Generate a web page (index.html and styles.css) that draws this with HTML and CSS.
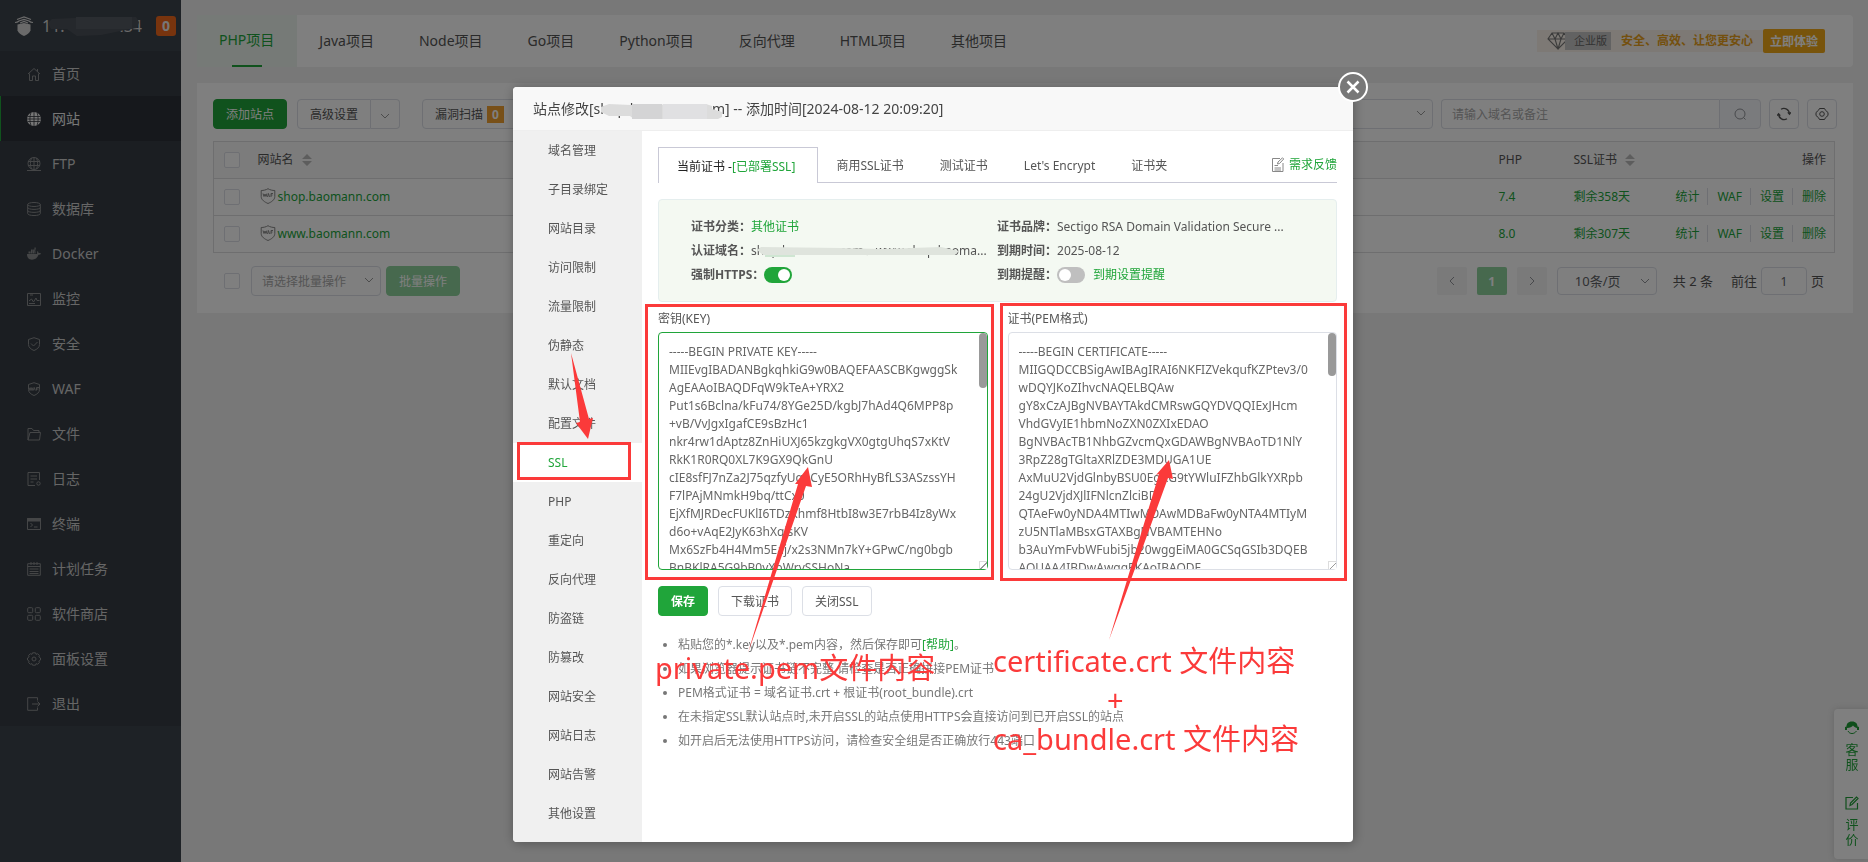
FILE: index.html
```html
<!DOCTYPE html>
<html lang="zh-CN">
<head>
<meta charset="utf-8">
<title>网站管理</title>
<link rel="stylesheet" href="styles.css">
</head>
<body>
<div class="app">
  <aside class="sidebar">
    <div class="brand">
      <svg class="brand-logo" viewBox="0 0 20 20" width="20" height="20"><path d="M3.500 8.500L10 7l6.500 1.500v6C15.500 17 13 19 10 20c-3-1-5.500-3-6.500-5.500z" fill="#d5d5d5"/><path d="M1 6.500c2 0 3-.5 4-1.500L10 3.500 15 5c1 1 2 1.500 4 1.500M3 3.500L10 1l7 2.500M6 7l4-1.500L14 7" fill="none" stroke="#d5d5d5" stroke-width="1.200"/></svg>
      <span class="brand-ip"><span>1</span><span>1.</span><span>.34</span><svg class="smear" viewBox="0 0 92 22" width="92" height="22"><path d="M0 7l4-4 24-1 60-1 3 5-2 6-12 2-24 5-24 1-10-7H3z" fill="#4b5159"/><path d="M28 1h56v12H28z" fill="#555b62"/></svg></span>
      <span class="brand-badge">0</span>
    </div>
    <nav class="menu">
      <a href="#"><svg viewBox="0 0 14 14"><path d="M1 7l6-5.500L13 7M2.500 6.500v7H5.500V9h3v4.500h3v-7M10.500 2v2.500"/></svg>首页</a>
      <a href="#" class="active"><svg viewBox="0 0 14 14"><circle cx="7" cy="7" r="7" fill="#eee" stroke="none"/><path d="M.5 4.500h13M.5 9.500h13M7 0v14M0 7h14M4 .5c-1.500 4-1.500 9 0 13M10 .5c1.500 4 1.500 9 0 13" stroke="#2d3138" stroke-width=".8"/></svg>网站</a>
      <a href="#"><svg viewBox="0 0 14 14"><circle cx="7" cy="6.500" r="6"/><path d="M1 4.500h12M1 8.500h12M7 .5v12M4.500 1c-1.500 3.500-1.500 7.500 0 11M9.500 1c1.500 3.500 1.500 7.500 0 11M0 13.500h14"/></svg>FTP</a>
      <a href="#"><svg viewBox="0 0 14 14"><ellipse cx="7" cy="2.500" rx="6.300" ry="2"/><path d="M.7 2.500v9c0 2.700 12.600 2.700 12.600 0v-9M.7 5.500c0 2.500 12.600 2.500 12.600 0M.7 8.500c0 2.500 12.600 2.500 12.600 0"/></svg>数据库</a>
      <a href="#"><svg viewBox="0 0 14 14"><path d="M0 7h10c.3-1-.2-2 .5-3 .8.7 1 1.300 1 2 1 0 2 0 2.500.4-.5 1-1.500 1.400-2.500 1.400C10.500 11 8 12.700 5 12.700 2 12.700 0 11 0 7z" fill="#8a8c8e" stroke="none"/><path d="M1.500 5.500h7M4 3.500h4.500M7.500 1.500h1.200" stroke-width="1.800" stroke-dasharray="1.700 .4"/></svg>Docker</a>
      <a href="#"><svg viewBox="0 0 14 14"><path d="M.5 1.500h13v12H.5zM2 9l2.500-2 2 3L9 6l1 2.500h2.500M3 3h3M2 11.500h6"/></svg>监控</a>
      <a href="#"><svg viewBox="0 0 14 14"><path d="M7 .7l5.500 1.800v5c0 3-2.500 4.800-5.500 6-3-1.200-5.500-3-5.500-6v-5zM4 6.500L6.500 9l4-4"/></svg>安全</a>
      <a href="#"><svg viewBox="0 0 14 14"><path d="M7 .7l5.500 1.800v5c0 3-2.500 4.800-5.500 6-3-1.200-5.500-3-5.500-6v-5z"/><path d="M2 5.500l1 3 1-3 1 3L6 5.500M6.300 8.500l1-3 1 3M9.500 8.500v-3h2.500M9.500 7h2"/></svg>WAF</a>
      <a href="#"><svg viewBox="0 0 14 14"><path d="M1 13V1.500h4L6.500 3.500H12v2M1 13l2-7.500h10.500L12.500 13z"/></svg>文件</a>
      <a href="#"><svg viewBox="0 0 14 14"><path d="M8 13.500H1V.5h11.500V8M3.500 4h6.500M3.500 7h6.500M3.500 10h3"/><circle cx="11.500" cy="11.500" r="1.700"/></svg>日志</a>
      <a href="#"><svg viewBox="0 0 14 14"><path d="M.5 1.500h13v11H.5zM3.500 6l2 2-2 2M7 10h3.500"/><path d="M.5 1.500h13v2.500H.5z" fill="#8a8c8e"/></svg>终端</a>
      <a href="#"><svg viewBox="0 0 14 14"><path d="M.7 1.700h12.600v11.600H.7zM.7 4.500h12.600M4 0v3M7 0v3M10 0v3M2.500 7h9M2.500 9.500h9M2.500 11.500h9" /></svg>计划任务</a>
      <a href="#"><svg viewBox="0 0 14 14"><rect x=".7" y=".7" width="5" height="5" rx="1"/><rect x="8.300" y=".7" width="5" height="5" rx="1"/><rect x=".7" y="8.300" width="5" height="5" rx="1"/><rect x="8.300" y="8.300" width="5" height="5" rx="1"/></svg>软件商店</a>
      <a href="#"><svg viewBox="0 0 14 14"><path d="M5.500 .8h3l.5 1.500 1.700-.5 1.700 1.600-.5 1.600.6.500 1 .5v2l-1 .5-.6.500.5 1.600-1.700 1.600L9 11.700l-.5 1.500h-3L5 11.700l-1.700.5-1.700-1.600.5-1.600-.6-.5-1-.5V6l1-.5.6-.5-.5-1.600 1.700-1.600L5 2.300z"/><circle cx="7" cy="7" r="2"/></svg>面板设置</a>
      <a href="#"><svg viewBox="0 0 14 14"><path d="M10.500 3.500V.7H.7v12.600h9.800v-2.800M5 7h8M10.500 4.500L13 7l-2.500 2.500"/></svg>退出</a>
    </nav>
  </aside>

  <main class="main">
    <header class="topnav">
      <nav class="project-tabs">
        <a href="#" class="active">PHP项目</a><a href="#">Java项目</a><a href="#">Node项目</a><a href="#">Go项目</a><a href="#">Python项目</a><a href="#">反向代理</a><a href="#">HTML项目</a><a href="#">其他项目</a>
      </nav>
      <div class="promo">
        <svg class="diamond" viewBox="0 0 22 18" width="22" height="18"><path d="M5 1h12l4 6-10 10L1 7zM1 7h20M8 7l3 10 3-10M5 1l3 6 3-6 3 6 3-6" fill="none" stroke="#777" stroke-width="1.100"/></svg>
        <span class="edition">企业版</span>
        <strong>安全、高效、让您更安心</strong>
        <button type="button">立即体验</button>
      </div>
    </header>

    <section class="panel">
      <div class="toolbar">
        <button type="button" class="btn primary">添加站点</button>
        <div class="split"><button type="button" class="btn">高级设置</button><button type="button" class="btn arrow" aria-label="更多"><svg class="chev" viewBox="0 0 10 6"><path d="M1 1l4 4 4-4"/></svg></button></div>
        <button type="button" class="btn scan">漏洞扫描<b>0</b></button>
        <span class="spacer"></span>
        <div class="picker category"><select aria-label="分类"><option>全部分类</option></select><svg class="chev" viewBox="0 0 10 6"><path d="M1 1l4 4 4-4"/></svg></div>
        <div class="search"><input type="text" aria-label="搜索" placeholder="请输入域名或备注"><button type="button" aria-label="搜索"><svg viewBox="0 0 14 14" width="14" height="14"><circle cx="7" cy="7" r="5"/><path d="M10.500 10.500L12.500 12.500"/></svg></button></div>
        <button type="button" class="btn square" aria-label="刷新"><svg viewBox="0 0 14 14" width="14" height="14"><path d="M4 2.300A5.500 5.500 0 0 1 12.400 7M10 11.700A5.500 5.500 0 0 1 1.600 7M10.800 5.300l1.700 2 1.400-2M.2 8.700l1.400-2 1.700 2" stroke-width="1.300"/></svg></button>
        <button type="button" class="btn square" aria-label="设置"><svg viewBox="0 0 14 14" width="14" height="14"><path d="M4.500 1.500h5l1 1.800 2.500 2.200v3l-2.500 2.200-1 1.800h-5l-1-1.800L1 8.500v-3l2.500-2.200z"/><circle cx="7" cy="7" r="2.300"/></svg></button>
      </div>

      <table class="sites">
        <colgroup><col class="c-check"><col><col class="c-php"><col class="c-ssl"><col class="c-ops"></colgroup>
        <thead><tr><th><input type="checkbox" aria-label="全选"></th><th>网站名<svg class="sort" viewBox="0 0 10 12"><path d="M5 0l5 5H0zM5 12l5-5H0z"/></svg></th><th>PHP</th><th>SSL证书<svg class="sort" viewBox="0 0 10 12"><path d="M5 0l5 5H0zM5 12l5-5H0z"/></svg></th><th class="right">操作</th></tr></thead>
        <tbody>
          <tr><td><input type="checkbox" aria-label="shop.baomann.com"></td><td><svg class="shield" viewBox="0 0 16 16"><path d="M8 .7C6 2 3.500 2.500 1.200 2.500v6c0 3.500 3.500 5.500 6.800 7 3.300-1.500 6.800-3.500 6.800-7v-6C12.500 2.500 10 2 8 .7z"/><path d="M3 5.500l1 3 1-2.500 1 2.500 1-3M7.500 9l1-3.500 1 3.500M11 9V5.500h2M11 7h1.500"/></svg><a href="#">shop.baomann.com</a></td><td><a href="#">7.4</a></td><td><a href="#">剩余358天</a></td><td class="ops"><a href="#">统计</a><a href="#">WAF</a><a href="#">设置</a><a href="#">删除</a></td></tr>
          <tr><td><input type="checkbox" aria-label="www.baomann.com"></td><td><svg class="shield" viewBox="0 0 16 16"><path d="M8 .7C6 2 3.500 2.500 1.200 2.500v6c0 3.500 3.500 5.500 6.800 7 3.300-1.500 6.800-3.500 6.800-7v-6C12.500 2.500 10 2 8 .7z"/><path d="M3 5.500l1 3 1-2.500 1 2.500 1-3M7.500 9l1-3.500 1 3.500M11 9V5.500h2M11 7h1.500"/></svg><a href="#">www.baomann.com</a></td><td><a href="#">8.0</a></td><td><a href="#">剩余307天</a></td><td class="ops"><a href="#">统计</a><a href="#">WAF</a><a href="#">设置</a><a href="#">删除</a></td></tr>
        </tbody>
      </table>

      <div class="footer">
        <input type="checkbox" aria-label="批量选择">
        <div class="picker batch"><select aria-label="批量操作"><option>请选择批量操作</option></select><svg class="chev" viewBox="0 0 10 6"><path d="M1 1l4 4 4-4"/></svg></div>
        <button type="button" class="btn primary faded">批量操作</button>
        <span class="spacer"></span>
        <div class="pager">
          <button type="button" aria-label="上一页"><svg viewBox="0 0 8 10" width="8" height="10"><path d="M6 1L2 5l4 4"/></svg></button>
          <button type="button" class="on">1</button>
          <button type="button" aria-label="下一页"><svg viewBox="0 0 8 10" width="8" height="10"><path d="M2 1l4 4-4 4"/></svg></button>
          <div class="picker size"><select aria-label="每页条数"><option>10条/页</option></select><svg class="chev" viewBox="0 0 10 6"><path d="M1 1l4 4 4-4"/></svg></div>
          <span class="total">共 2 条</span>
          <label class="jump">前往<input type="text" value="1">页</label>
        </div>
      </div>
    </section>
  </main>
</div>

<aside class="service">
  <a href="#"><svg viewBox="0 0 14 14" width="14" height="14"><path d="M7 .5C3 .5 1.500 3 1.500 5.500L0 6v3h2V7c3 0 5-1 6-2.500C9 6 11 7 12 7v2h2V6l-1.500-.5C12.500 3 11 .5 7 .5z" fill="#1f9d36"/><path d="M3 10c1 2 2.500 2.500 4 2.500s3-.5 4.500-2.500" fill="none" stroke="#1f9d36"/></svg><span>客服</span></a>
  <a href="#"><svg viewBox="0 0 14 14" width="14" height="14"><path d="M8 1.500H1v11.500h11.500V7M5 9.500l.5-2.500L11.500 1 13 2.500l-6 6z" fill="none" stroke="#1f9d36" stroke-width="1.200"/></svg><span>评价</span></a>
</aside>

<div class="overlay">
  <div class="dialog" role="dialog" aria-labelledby="dlg-title">
    <div class="dialog-head"><h1 id="dlg-title">站点修改[<span class="masked">shop.baomann.com<svg class="smear" viewBox="0 0 122 16" width="122" height="16"><path d="M0 4l8-3 22 1 75-1 6 2v3l10 3v5l-4 2H33l-4-3H8L0 9z" fill="#dcdcdc"/><path d="M62 1h44v15H62z" fill="#e0e0e2"/><path d="M31 1h30v15H31z" fill="#d4d4d5"/></svg></span>] -- 添加时间[2024-08-12 20:09:20]</h1></div>
    <button type="button" class="close" aria-label="关闭"><svg viewBox="0 0 30 30" width="30" height="30"><circle cx="15" cy="15" r="14" fill="#787878" stroke="#fff" stroke-width="2"/><path d="M9.500 9.500l11 11M20.500 9.500l-11 11" stroke="#fff" stroke-width="2.500"/></svg></button>
    <div class="dialog-body">
      <nav class="side">
        <a href="#">域名管理</a><a href="#">子目录绑定</a><a href="#">网站目录</a><a href="#">访问限制</a><a href="#">流量限制</a><a href="#">伪静态</a><a href="#">默认文档</a><a href="#">配置文件</a><a href="#" class="active">SSL</a><a href="#">PHP</a><a href="#">重定向</a><a href="#">反向代理</a><a href="#">防盗链</a><a href="#">防篡改</a><a href="#">网站安全</a><a href="#">网站日志</a><a href="#">网站告警</a><a href="#">其他设置</a>
      </nav>
      <div class="content">
        <div class="tabs">
          <button type="button" class="active">当前证书 -<span>[已部署SSL]</span></button><button type="button">商用SSL证书</button><button type="button">测试证书</button><button type="button">Let's Encrypt</button><button type="button">证书夹</button>
          <a href="#" class="feedback"><svg viewBox="0 0 14 16" width="14" height="16"><path d="M9 1.500H1.500v13H12V6M3.500 8.500H7M3.500 11h6.500M3.500 13h6.500M6.500 7l.5-2L11.500.8l1.200 1.200L8.500 6.500z" fill="none" stroke="#888"/></svg>需求反馈</a>
        </div>
        <div class="info">
          <div class="pair"><b>证书分类：</b><span class="green">其他证书</span></div>
          <div class="pair"><b>证书品牌：</b><span>Sectigo RSA Domain Validation Secure ...</span></div>
          <div class="pair"><b>认证域名：</b><span class="masked">shop.baomann.com、www.shop.baoma...<svg class="smear" viewBox="0 0 202 12" width="202" height="12"><path d="M0 5l4-3 80 1 40 1 30-1 30-1 18 4-4 4h-26l-50 0H6z" fill="#dfe4dd"/><path d="M8 10h30v2H8z" fill="#cfe6d2"/></svg></span></div>
          <div class="pair"><b>到期时间：</b><span>2025-08-12</span></div>
          <div class="pair"><b>强制HTTPS：</b><input type="checkbox" class="switch" aria-label="强制HTTPS" checked></div>
          <div class="pair"><b>到期提醒：</b><input type="checkbox" class="switch" aria-label="到期提醒"><a href="#" class="green">到期设置提醒</a></div>
        </div>
        <div class="pems">
          <div class="pem">
            <label for="key">密钥(KEY)</label>
            <div class="box"><textarea id="key" class="focused" spellcheck="false">-----BEGIN PRIVATE KEY-----
MIIEvgIBADANBgkqhkiG9w0BAQEFAASCBKgwggSk
AgEAAoIBAQDFqW9kTeA+YRX2
Put1s6Bclna/kFu74/8YGe25D/kgbJ7hAd4Q6MPP8p
+vB/VvJgxIgafCE9sBzHc1
nkr4rw1dAptz8ZnHiUXJ65kzgkgVX0gtgUhqS7xKtV
RkK1R0RQ0XL7K9GX9QkGnU
cIE8sfFJ7nZa2J75qzfyUqnCyE5ORhHyBfLS3ASzssYH
F7lPAjMNmkH9bq/ttCx0
EjXfMJRDecFUKlI6TDzKhmf8HtbI8w3E7rbB4Iz8yWx
d6o+vAqE2JyK63hXqjsKV
Mx6SzFb4H4Mm5Eaj/x2s3NMn7kY+GPwC/ng0bgb
BnBKlRA5G9bB0yXbWrySSHoNa</textarea><i class="thumb tall"></i><i class="grip"></i></div>
          </div>
          <div class="pem">
            <label for="crt">证书(PEM格式)</label>
            <div class="box"><textarea id="crt" spellcheck="false">-----BEGIN CERTIFICATE-----
MIIGQDCCBSigAwIBAgIRAI6NKFIZVekqufKZPtev3/0
wDQYJKoZIhvcNAQELBQAw
gY8xCzAJBgNVBAYTAkdCMRswGQYDVQQIExJHcm
VhdGVyIE1hbmNoZXN0ZXIxEDAO
BgNVBAcTB1NhbGZvcmQxGDAWBgNVBAoTD1NlY
3RpZ28gTGltaXRlZDE3MDUGA1UE
AxMuU2VjdGlnbyBSU0EgRG9tYWluIFZhbGlkYXRpb
24gU2VjdXJlIFNlcnZlciBD
QTAeFw0yNDA4MTIwMDAwMDBaFw0yNTA4MTIyM
zU5NTlaMBsxGTAXBgNVBAMTEHNo
b3AuYmFvbWFubi5jb20wggEiMA0GCSqGSIb3DQEB
AQUAA4IBDwAwggEKAoIBAQDF</textarea><i class="thumb"></i><i class="grip"></i></div>
          </div>
        </div>
        <div class="actions"><button type="button" class="btn primary strong">保存</button><button type="button" class="btn">下载证书</button><button type="button" class="btn">关闭SSL</button></div>
        <ul class="notes">
          <li>粘贴您的*.key以及*.pem内容，然后保存即可<a href="#" class="green">[帮助]</a>。</li>
          <li>如果浏览器提示证书链不完整,请检查是否正确拼接PEM证书</li>
          <li>PEM格式证书 = 域名证书.crt + 根证书(root_bundle).crt</li>
          <li>在未指定SSL默认站点时,未开启SSL的站点使用HTTPS会直接访问到已开启SSL的站点</li>
          <li>如开启后无法使用HTTPS访问，请检查安全组是否正确放行443端口</li>
        </ul>
      </div>
    </div>
    <div class="marks">
      <svg viewBox="0 0 840 755" width="840" height="755">
        <g fill="none" stroke="#fb3a3a" stroke-width="3"><path d="M133.500 218.500h346v273h-346zM488.500 217.500h344v275h-344zM5.500 356.500h111v35H5.500z"/></g>
        <g fill="#fb3a3a"><path d="M58 266l18 66 4-1-5 21-12-16 4-1zM235 566l50-169-3 0 13-17 4 20-6-1zM596 553l50-166-3 1 13-15 4 19-5-1z"/></g>
      </svg>
      <p class="m-key">private.pem文件内容</p>
      <p class="m-crt">certificate.crt 文件内容</p>
      <p class="m-plus">+</p>
      <p class="m-ca">ca_bundle.crt 文件内容</p>
    </div>
  </div>
</div>
</body>
</html>
```
FILE: styles.css
```css
* { box-sizing: border-box; }
body, button, input, select, textarea {
  font-family: "Noto Sans", "Noto Sans CJK SC", sans-serif;
  font-size: 12px;
}
body { margin: 0; background: #f0f0f0; color: #555; line-height: 18px; }
a { color: inherit; text-decoration: none; }
button { cursor: pointer; }
p, h1, ul { margin: 0; padding: 0; font-weight: normal; }
svg { flex: none; }

.app { display: flex; min-height: 100vh; }
.sidebar { width: 181px; flex: none; background: #3d444c; }
.brand { height: 51px; display: flex; align-items: center; padding: 0 5px 0 14px; color: #d5d5d5; font-size: 16px; }
.brand-ip { position: relative; margin-left: 8px; width: 100px; display: flex; }
.brand-ip span:nth-child(3) { margin-left: auto; }
.brand-ip .smear { left: 6px; top: -1px; }
.smear { position: absolute; }
.brand-badge { margin-left: auto; width: 20px; height: 20px; border-radius: 3px; background: #f0681c; color: #eee; font-weight: bold; font-size: 14px; line-height: 20px; text-align: center; }
.menu { background: #363d45; }
.menu a { display: flex; align-items: center; gap: 11px; height: 45px; padding-left: 27px; font-size: 14px; color: #ccc; }
.menu svg { width: 14px; height: 14px; fill: none; stroke: #8a8c8e; stroke-width: 1; }
.menu .active { background: #2d3138; padding-left: 26px; border-left: 1px solid #20a53a; color: #eee; }

.main { flex: 1; min-width: 0; padding: 15px 15px 16px 16px; }
.topnav { display: flex; justify-content: space-between; align-items: center; height: 52px; background: #fff; border-radius: 4px; padding-right: 28px; margin-bottom: 16px; }
.project-tabs { display: flex; height: 52px; }
.project-tabs a { padding: 0 23px 0 22px; line-height: 52px; font-size: 14px; color: #555; white-space: nowrap; }
.project-tabs .active { color: #20a53a; background: #ecf5ee; display: flex; flex-direction: column; align-items: center; line-height: 50px; }
.project-tabs .active::after { content: ""; width: 30px; height: 2px; background: #20a53a; }
.promo { display: flex; align-items: center; height: 22px; padding-left: 10px; background: #faf3ea; }
.edition { height: 18px; padding: 0 4px 0 9px; margin: 0 10px 0 -4px; background: #c4c4c4; color: #666; font-size: 11px; line-height: 18px; }
.promo strong { color: #e8a01c; margin-right: 10px; }
.promo button { height: 24px; padding: 0 7px; border: 0; border-radius: 2px; background: #f0a818; color: #fff; font-weight: bold; }

.panel { background: #fff; padding: 16px 16px 17px; }
.toolbar, .footer { display: flex; align-items: center; }
.spacer { flex: 1; }
.btn { height: 30px; padding: 0 12px; border: 1px solid #dcdfe6; border-radius: 4px; background: #fff; color: #555; white-space: nowrap; }
.btn.primary { background: #20a53a; border-color: #20a53a; color: #fff; }
.btn.strong { font-weight: bold; }
.split { display: flex; margin: 0 22px 0 10px; }
.split .btn:first-child { border-radius: 4px 0 0 4px; }
.split .arrow { border-radius: 0 4px 4px 0; border-left: 0; padding: 0 9px; }
.chev { width: 10px; height: 6px; fill: none; stroke: #999; }
.scan b { background: #f0a030; color: #fff; margin-left: 4px; padding: 0 5px; }
.picker { position: relative; }
.picker select { appearance: none; width: 100%; height: 30px; padding: 0 28px 0 10px; border: 1px solid #dcdfe6; border-radius: 4px; background: #fff; color: #aaa; }
.picker .chev { position: absolute; right: 7px; top: 11px; }
.category { width: 160px; }
.search { display: flex; margin: 0 8px; }
.search input { width: 278px; height: 30px; padding: 0 10px; border: 1px solid #dcdfe6; border-right: 0; border-radius: 4px 0 0 4px; }
.search input::placeholder { color: #aaa; }
.search button { width: 42px; height: 30px; border: 1px solid #dcdfe6; border-radius: 0 4px 4px 0; background: #f5f7fa; display: grid; place-items: center; }
.search svg, .square svg, .pager svg { fill: none; stroke: #909399; }
.square { width: 30px; padding: 0; display: grid; place-items: center; }
.square svg { stroke: #555; }
.square + .square { margin-left: 8px; }

.sites { width: calc(100% - 2px); table-layout: fixed; border-collapse: collapse; border: 1px solid #dcdddf; margin: 12px 0 13px; }
.c-check { width: 36px; } .c-php { width: 75px; } .c-ssl { width: 80px; } .c-ops { width: 189px; }
.sites th, .sites td { height: 37px; padding: 0 8px; font-weight: normal; text-align: left; border-bottom: 1px solid #dcdddf; white-space: nowrap; }
.sites th { background: #f8f8f8; }
.sites th:first-child, .sites td:first-child { padding: 0 0 0 10px; }
.sites .right, .sites .ops { text-align: right; }
.sites a { color: #20a53a; }
.ops a + a { margin-left: 8px; padding-left: 9px; border-left: 1px solid #dcdfe6; }
.sort { width: 10px; height: 12px; fill: #bbb; margin-left: 8px; vertical-align: -2px; }
.shield { width: 16px; height: 16px; margin: 0 2px; vertical-align: -3px; fill: none; stroke: #888; stroke-width: 1; }
input[type="checkbox"] { appearance: none; display: block; width: 16px; height: 16px; margin: 0; border: 1px solid #dcdfe6; border-radius: 2px; background: #fff; }
.footer { padding-left: 11px; height: 30px; }
.batch { width: 130px; margin: 0 5px 0 11px; }
.btn.faded { background: #8fd29d; border-color: #8fd29d; }
.pager { display: flex; align-items: center; padding-right: 13px; font-size: 13px; }
.pager button { width: 30px; height: 28px; margin-right: 10px; border: 0; border-radius: 2px; background: #f4f4f5; color: #fff; font-weight: bold; display: grid; place-items: center; }
.pager .on { background: #8fd29d; }
.size { width: 100px; margin-right: 16px; }
.size select { height: 28px; padding-left: 17px; color: #606266; font-size: 13px; }
.total { margin-right: 18px; }
.jump { display: flex; align-items: center; gap: 4px; }
.jump input { width: 46px; height: 28px; border: 1px solid #dcdfe6; border-radius: 4px; text-align: center; color: #606266; }

.service { position: fixed; right: 0; bottom: 3px; width: 34px; display: flex; flex-direction: column; gap: 24px; padding: 12px 2px 12px 4px; background: #fff; border-radius: 4px 0 0 4px; box-shadow: 0 0 6px #ccc; }
.service a { display: flex; flex-direction: column; align-items: center; gap: 7px; color: #20a53a; font-size: 13px; line-height: 15px; }
.service span { width: 13px; }

.overlay { position: fixed; inset: 0; display: flex; justify-content: center; align-items: flex-start; padding: 87px 2px 0 0; background: rgba(0, 0, 0, .5); }
.dialog { position: relative; width: 840px; background: #fff; border-radius: 4px; box-shadow: 1px 1px 12px rgba(0, 0, 0, .3); }
.dialog-head { height: 44px; padding: 0 20px; background: #f8f8f8; border-bottom: 1px solid #eee; border-radius: 4px 4px 0 0; }
.dialog-head h1 { font-size: 14px; line-height: 43px; color: #444; }
.masked { position: relative; }
.dialog-head .smear { left: 7px; top: 4px; }
.close { position: absolute; right: -15px; top: -15px; width: 30px; height: 30px; padding: 0; border: 0; background: none; }
.dialog-body { display: flex; }
.side { width: 129px; flex: none; background: #f0f0f0; padding-bottom: 9px; border-radius: 0 0 0 4px; }
.side a { display: block; height: 39px; line-height: 40px; padding-left: 35px; }
.side .active { background: #fff; color: #20a53a; }
.content { flex: 1; min-width: 0; padding: 16px 16px 0; }
.tabs { display: flex; height: 36px; border-bottom: 1px solid #c9c9d6; }
.tabs button { height: 36px; padding: 0 18px; border: 0; background: none; color: #555; white-space: nowrap; }
.tabs .active { padding-right: 22px; border: 1px solid #c9c9d6; border-bottom: 0; background: #fff; color: #222; }
.tabs span, .green { color: #20a53a; }
.feedback { margin-left: auto; display: flex; align-items: center; gap: 4px; color: #20a53a; }
.info { display: grid; grid-template-columns: 306px 1fr; margin-top: 16px; padding: 15px 32px 14px; border: 1px solid #e5eeee; border-radius: 4px; background: #f4f9f2; }
.pair { display: flex; align-items: center; height: 24px; min-width: 0; white-space: nowrap; }
.pair b { color: #555; }
.pair .smear { left: 6px; top: 3px; }
.pair .switch { flex: none; position: relative; width: 28px; height: 16px; border: 0; border-radius: 8px; background: #bfbfbf; margin-right: 8px; }
.switch::after { content: ""; position: absolute; left: 2px; top: 2px; width: 12px; height: 12px; border-radius: 50%; background: #fff; }
.pair .switch:checked { background: #20a53a; }
.switch:checked::after { left: 14px; }
.pems { display: grid; grid-template-columns: 1fr 1fr; gap: 20px; margin-top: 8px; }
.pem label { display: block; margin-bottom: 4px; }
.box { position: relative; height: 238px; }
.box textarea { display: block; width: 100%; height: 238px; padding: 10px; border: 1px solid #dcdfe6; border-radius: 4px; resize: none; overflow: hidden; white-space: pre; line-height: 18px; color: #666; outline: 0; }
.box .focused { border-color: #20a53a; }
.thumb { position: absolute; right: 1px; top: 1px; width: 8px; height: 43px; border-radius: 4px; background: #999; }
.thumb.tall { height: 55px; }
.grip { position: absolute; right: 1px; bottom: 1px; width: 8px; height: 8px; border: solid #ddd; border-width: 1px 0 0 1px; background: linear-gradient(135deg, #fff 50%, #999 50%, #999 60%, #fff 60%); }
.actions { display: flex; gap: 10px; margin-top: 16px; }
.notes { margin-top: 17px; padding-left: 20px; line-height: 24px; color: #777; }

.marks { position: absolute; inset: 0; pointer-events: none; color: #fb3a3a; font-size: 29px; line-height: 40px; white-space: nowrap; }
.marks svg { position: absolute; left: 0; top: 0; }
.marks p { position: absolute; }
.m-key { left: 142px; top: 561px; }
.m-crt { left: 480px; top: 554px; }
.m-plus { left: 594px; top: 593px; }
.m-ca { left: 480px; top: 632px; }
```
